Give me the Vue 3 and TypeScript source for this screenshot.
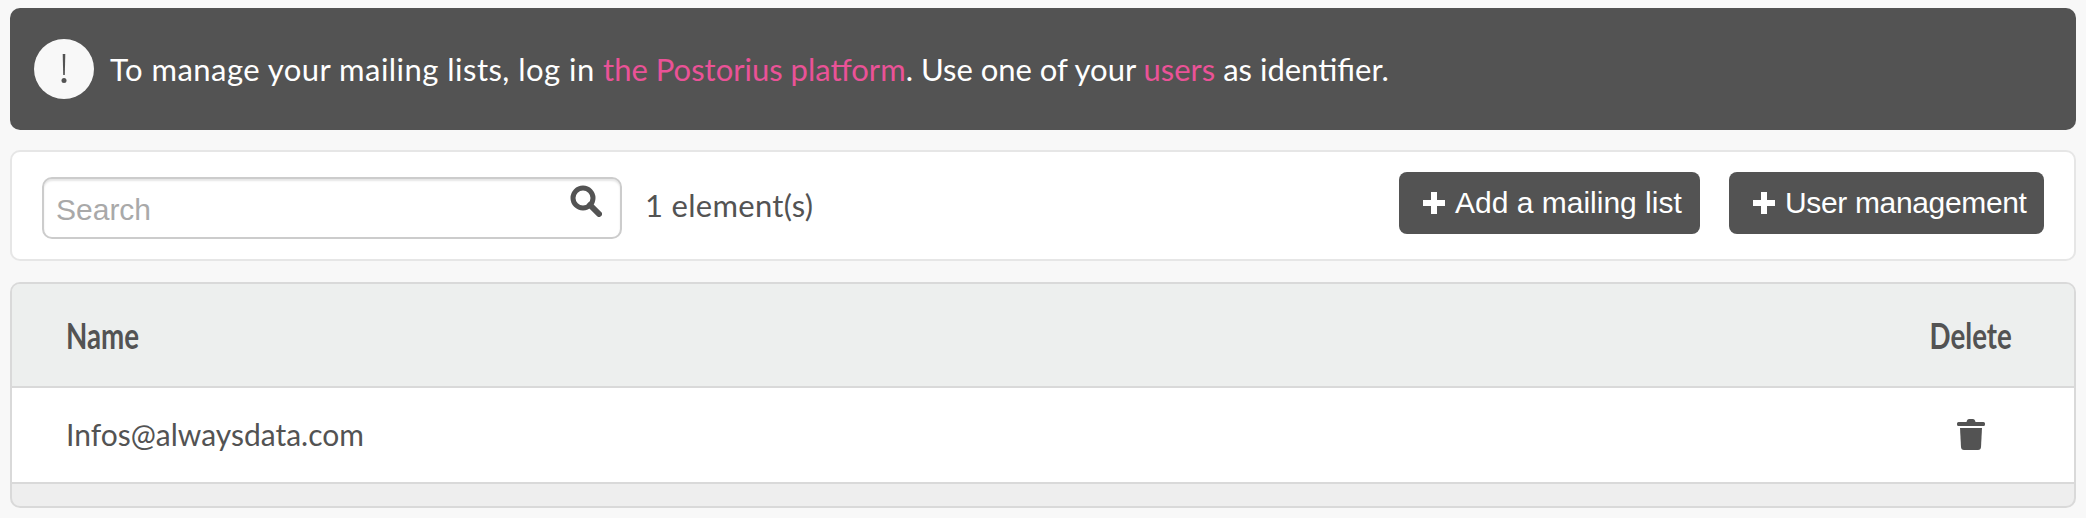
<template>
  <div class="page">
    <div class="notice">
      <span class="notice-icon">
        <svg viewBox="0 0 8 30" width="8" height="30">
          <path d="M2.700 0h2.600l-.5 21h-1.600z" fill="#535353" />
          <circle cx="4" cy="26.500" r="2.500" fill="#535353" />
        </svg>
      </span>
      <span class="notice-text"><span class="lead">To manage your mailing lists, log in </span><a href="#">the Postorius platform</a>. Use one of your <a href="#">users</a> as identifier.</span>
    </div>

    <div class="toolbar">
      <div class="search">
        <input class="search-input" type="text" placeholder="Search" />
        <svg class="search-icon" viewBox="0 0 32 32" width="32" height="32">
          <circle cx="13" cy="13" r="10" fill="none" stroke="#535353" stroke-width="5" />
          <path d="M20 20l9 9" stroke="#535353" stroke-width="6" stroke-linecap="round" />
        </svg>
      </div>
      <span class="count">{{ rows.length }} element(s)</span>
      <div class="actions">
        <button v-for="a in actions" :key="a" class="btn">
          <svg viewBox="0 0 22 22" width="22" height="22"><path d="M8 0h6v8h8v6h-8v8H8v-8H0V8h8z" fill="#fff" /></svg>
          {{ a }}
        </button>
      </div>
    </div>

    <div class="table">
      <div class="row head">
        <span class="th">Name</span>
        <span class="th end">Delete</span>
      </div>
      <div v-for="r in rows" :key="r" class="row body">
        <span>{{ r }}</span>
        <svg class="trash" viewBox="0 0 28 32" width="28" height="32">
          <path d="M10 2.500q.4-1.500 2-1.500h4q1.600 0 2 1.500l.5 1.500h8q1.500 0 1.500 1.500v1q0 1.500-1.500 1.500H1.500Q0 8 0 6.500v-1Q0 4 1.500 4h8z" fill="#535353" />
          <path d="M3 10h22l-1 19q-.2 3-3 3H7q-2.800 0-3-3z" fill="#535353" />
        </svg>
      </div>
      <div class="foot"></div>
    </div>
  </div>
</template>

<script setup lang="ts">
const actions: string[] = ['Add a mailing list', 'User management']
const rows: string[] = ['Infos@alwaysdata.com']
</script>

<style>
html, body { margin: 0; background: #f8f8f8; }
</style>

<style scoped>
.page {
  padding: 8px 10px;
  display: flex;
  flex-direction: column;
  gap: 20px;
  color: #535353;
  font-family: Lato, "Noto Sans", sans-serif;
}

.notice {
  height: 122px;
  box-sizing: border-box;
  padding-left: 24px;
  display: flex;
  align-items: center;
  gap: 16px;
  background: #535353;
  border-radius: 10px;
  color: #fff;
  font-size: 31px;
}
.notice .lead { letter-spacing: .47px; }
.notice-icon {
  width: 60px;
  height: 60px;
  border-radius: 50%;
  background: #f8f8f8;
  display: flex;
  align-items: center;
  justify-content: center;
}
.notice a { color: #ea5297; text-decoration: none; }

.toolbar {
  height: 111px;
  box-sizing: border-box;
  padding: 0 30px;
  display: flex;
  align-items: center;
  background: #fff;
  border: 2px solid #e6e6e6;
  border-radius: 10px;
}
.search { position: relative; width: 580px; height: 62px; margin-top: 4px; }
.search-input {
  width: 100%;
  height: 100%;
  box-sizing: border-box;
  padding: 4px 60px 0 12px;
  border: 2px solid #ccc;
  border-radius: 10px;
  box-shadow: inset 0 2px 2px rgba(0, 0, 0, .1);
  font: 30px "Liberation Sans", sans-serif;
  outline: none;
}
.search-input::placeholder { color: #a9a9a9; }
.search-icon { position: absolute; right: 20px; top: 8px; }
.count { margin: 0 0 2px 23px; font-size: 31px; letter-spacing: .3px; }
.actions { margin: -6px 0 0 auto; display: flex; gap: 29px; }
.btn {
  width: 301px;
  height: 62px;
  padding: 0 0 0 24px;
  display: flex;
  align-items: center;
  gap: 10px;
  border: none;
  border-radius: 8px;
  background: #535353;
  color: #fff;
  font: 30px "Liberation Sans", sans-serif;
}
.btn:last-child { width: 315px; letter-spacing: -.35px; }

.table {
  height: 226px;
  margin-top: 1px;
  box-sizing: border-box;
  display: flex;
  flex-direction: column;
  border: 2px solid #d9d9d9;
  border-radius: 10px;
  overflow: hidden;
  background: #eee;
}
.row {
  display: flex;
  align-items: center;
  justify-content: space-between;
  padding: 0 62px 0 54px;
}
.head {
  height: 104px;
  background: #edefee;
  border-bottom: 2px solid #d9d9d9;
  box-sizing: border-box;
  font-size: 36px;
  font-weight: 700;
}
.th { display: inline-block; transform: scaleX(.77); transform-origin: left center; }
.th.end { transform-origin: right center; }
.body {
  height: 96px;
  padding-bottom: 2px;
  background: #fff;
  border-bottom: 2px solid #d9d9d9;
  box-sizing: border-box;
  font-size: 30px;
}
.trash { margin-right: 27px; }
.foot { flex: 1; }
</style>
